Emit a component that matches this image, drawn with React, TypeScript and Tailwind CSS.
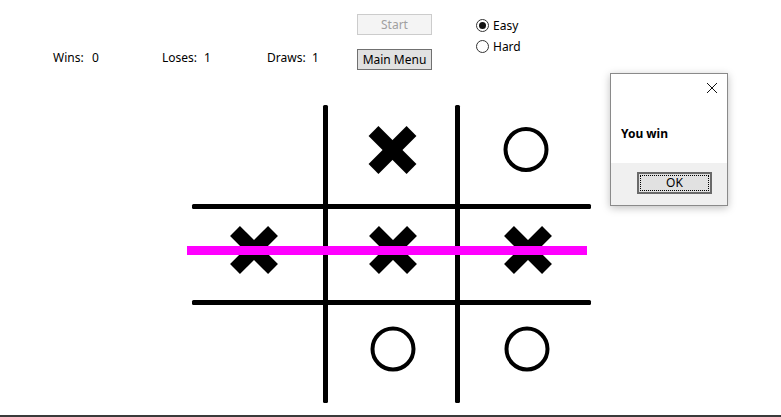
import React from "react";

const font = { fontFamily: '"Noto Sans", "Open Sans", "Liberation Sans", sans-serif' };

function XMark({ cx, cy }: { cx: number; cy: number }) {
  const d = 19;
  return (
    <g stroke="#000" strokeWidth={14} strokeLinecap="butt">
      <line x1={cx - d} y1={cy - d} x2={cx + d} y2={cy + d} />
      <line x1={cx - d} y1={cy + d} x2={cx + d} y2={cy - d} />
    </g>
  );
}

function OMark({ cx, cy }: { cx: number; cy: number }) {
  return <circle cx={cx} cy={cy} r={20.5} fill="none" stroke="#000" strokeWidth={4} />;
}

function Radio({ label, checked }: { label: string; checked?: boolean }) {
  return (
    <div className="flex h-[21px] items-center">
      <span className="flex h-[13px] w-[13px] items-center justify-center rounded-full border border-[#333333] bg-white">
        {checked && <span className="h-[7px] w-[7px] rounded-full bg-[#111111]" />}
      </span>
      <span className="ml-[4px] text-[12px] leading-none text-black">{label}</span>
    </div>
  );
}

export default function App() {
  return (
    <div
      className="relative h-[417px] w-[781px] overflow-hidden border-b-2 border-[#3a3a3a] bg-white text-black"
      style={font}
    >
      <div className="flex pt-[14px]">
        <div className="flex w-[357px] pl-[53px] pt-[36px] text-[12px] leading-[16px]">
          <div className="flex w-[109px]">
            <span className="w-[39px]">Wins:</span>
            <span>0</span>
          </div>
          <div className="flex w-[105px]">
            <span className="w-[42px]">Loses:</span>
            <span>1</span>
          </div>
          <div className="flex">
            <span className="w-[45px]">Draws:</span>
            <span>1</span>
          </div>
        </div>
        <div className="flex w-[75px] flex-col gap-[14px]">
          <div className="flex h-[21px] items-center justify-center border border-[#cccccc] bg-[#f4f4f4] text-[12px] text-[#a0a0a0]">
            Start
          </div>
          <div className="flex h-[21px] items-center justify-center border border-[#707070] bg-[#e1e1e1] text-[12px] text-black">
            Main Menu
          </div>
        </div>
        <div className="ml-[44px] flex flex-col pt-[1px]">
          <Radio label="Easy" checked />
          <Radio label="Hard" />
        </div>
      </div>

      <svg
        className="ml-[185px] mt-[33px] block"
        width={410}
        height={303}
        viewBox="185 103 410 303"
      >
        <rect x={323} y={105} width={5} height={298} rx={1.5} fill="#000" />
        <rect x={455} y={105} width={5} height={298} rx={1.5} fill="#000" />
        <rect x={192} y={204} width={399} height={5} rx={1.5} fill="#000" />
        <rect x={192} y={300} width={399} height={5} rx={1.5} fill="#000" />

        <XMark cx={392.5} cy={150} />
        <OMark cx={526} cy={149.5} />

        <XMark cx={254} cy={250} />
        <XMark cx={393} cy={250} />
        <XMark cx={528} cy={250} />

        <OMark cx={393} cy={349} />
        <OMark cx={527} cy={349} />

        <rect x={187} y={246} width={400} height={9} fill="#ff00ff" />
      </svg>

      <div className="absolute left-[610px] top-[73px] flex h-[133px] w-[118px] flex-col border border-[#8a8a8a] bg-white shadow-[0_2px_8px_rgba(0,0,0,0.25)]">
        <div className="relative h-[89px]">
          <svg className="absolute left-[95px] top-[8px]" width={12} height={12} viewBox="0 0 12 12">
            <path d="M1 1 L11 11 M11 1 L1 11" stroke="#111" strokeWidth={1} />
          </svg>
          <div className="absolute left-[10px] top-[52px] text-[12px] font-bold leading-[16px]">You win</div>
        </div>
        <div className="relative flex-1 bg-[#f0f0f0]">
          <div className="absolute left-[26px] top-[9px] flex h-[22px] w-[75px] items-center justify-center border-2 border-[#6a6a6a] bg-[#e1e1e1] p-[1px]">
            <div className="flex h-full w-full items-center justify-center border border-dotted border-black text-[12px] leading-none">
              OK
            </div>
          </div>
        </div>
      </div>
    </div>
  );
}
